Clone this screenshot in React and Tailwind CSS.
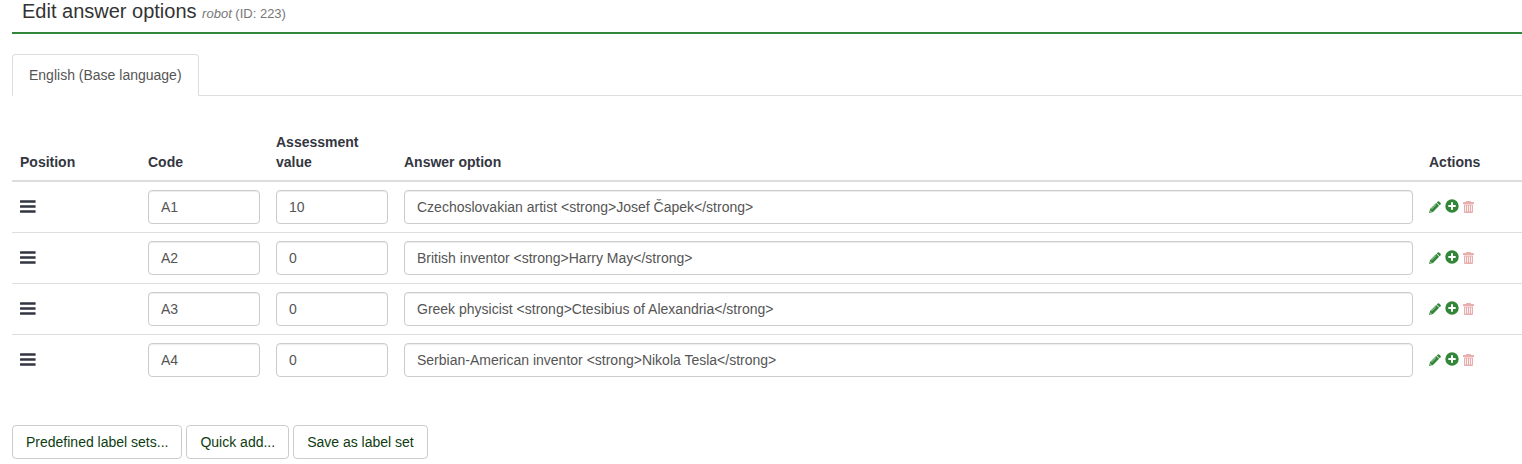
const answers = [
  { code: "A1", value: "10", text: "Czechoslovakian artist <strong>Josef Čapek</strong>" },
  { code: "A2", value: "0", text: "British inventor <strong>Harry May</strong>" },
  { code: "A3", value: "0", text: "Greek physicist <strong>Ctesibius of Alexandria</strong>" },
  { code: "A4", value: "0", text: "Serbian-American inventor <strong>Nikola Tesla</strong>" },
]

const BarsIcon = () => (
  <svg className="w-4 h-4" viewBox="0 0 16 16" fill="currentColor" aria-hidden="true">
    <rect x="0" y="1.2" width="15.6" height="2.6" rx="0.5" />
    <rect x="0" y="6.2" width="15.6" height="2.6" rx="0.5" />
    <rect x="0" y="11.2" width="15.6" height="2.6" rx="0.5" />
  </svg>
)

const PencilIcon = () => (
  <svg className="w-3 h-3" viewBox="0 0 12 12" fill="currentColor" aria-hidden="true">
    <path d="M8.8 0.5Q9.5 0 10.1 0.5L11.6 2Q12.1 2.6 11.6 3.2L10.6 4.3L7.7 1.4Z" />
    <path
      fillRule="evenodd"
      d="M7.2 1.9L10.1 4.8L4 10.9L0 12L1.1 8ZM6.7 3.4L2.2 7.9L2.6 8.3L7.1 3.8ZM1.6 9.4L1.2 10.8L2.6 10.4Z"
    />
  </svg>
)

const PlusCircleIcon = () => (
  <svg className="w-[14px] h-[14px]" viewBox="0 0 14 14" fill="currentColor" aria-hidden="true">
    <path
      fillRule="evenodd"
      d="M7 0.3A6.7 6.7 0 1 1 7 13.7A6.7 6.7 0 1 1 7 0.3ZM6 3.3V6H3.3V8H6V10.7H8V8H10.7V6H8V3.3Z"
    />
  </svg>
)

const TrashIcon = () => (
  <svg className="w-3 h-3" viewBox="0 0 12 12" fill="currentColor" aria-hidden="true">
    <path
      fillRule="evenodd"
      d="M3.8 0H7.2Q8 0 8 0.8V1H10.4Q11 1 11 1.6V3H0V1.6Q0 1 0.6 1H3V0.8Q3 0 3.8 0ZM4 0.9V1.1H7V0.9Z"
    />
    <path
      fillRule="evenodd"
      d="M1 3.6H10V11Q10 12 9 12H2Q1 12 1 11ZM2.1 4.4V10.6H2.9V4.4ZM4.1 4.4V10.6H4.9V4.4ZM6.1 4.4V10.6H6.9V4.4ZM8.1 4.4V10.6H8.9V4.4Z"
    />
  </svg>
)

const TextField = ({ label, value }) => (
  <input
    type="text"
    aria-label={label}
    defaultValue={value}
    className="block w-full h-[34px] px-3 rounded-[4px] border border-[#ccc] bg-white text-sm text-[#555] shadow-[inset_0_1px_1px_rgba(0,0,0,0.075)] focus:outline-none focus:border-[#328637]"
  />
)

const AnswerRow = ({ answer }) => (
  <tr className="border-t border-[#ddd] first:border-t-0">
    <td className="p-2">
      <button type="button" aria-label={`Move ${answer.code}`} className="block cursor-move">
        <BarsIcon />
      </button>
    </td>
    <td className="p-2">
      <TextField label={`Code ${answer.code}`} value={answer.code} />
    </td>
    <td className="p-2">
      <TextField label={`Assessment value ${answer.code}`} value={answer.value} />
    </td>
    <td className="p-2">
      <TextField label={`Answer option ${answer.code}`} value={answer.text} />
    </td>
    <td className="p-2">
      <div className="flex items-center gap-1 text-[#328637]">
        <button type="button" aria-label={`Edit ${answer.code}`}>
          <PencilIcon />
        </button>
        <button type="button" aria-label={`Add after ${answer.code}`} className="pb-[2px]">
          <PlusCircleIcon />
        </button>
        <button type="button" aria-label={`Delete ${answer.code}`} className="text-[#e8adad]">
          <TrashIcon />
        </button>
      </div>
    </td>
  </tr>
)

const ToolButton = ({ children }) => (
  <button
    type="button"
    className="h-[34px] px-[13px] rounded-[4px] border border-[#ccc] bg-white text-sm text-[#0d3c10] hover:bg-gray-100"
  >
    {children}
  </button>
)

const App = () => {
  return (
    <main className="pl-3 bg-white font-['Liberation_Sans',Arial,sans-serif] text-sm text-[#333641]">
      <h1 className="px-[10px] pb-[7px] border-b-2 border-[#328637] text-xl leading-[22px] text-[#333]">
        Edit answer options{" "}
        <small className="text-[13px] text-[#777]">
          <em>robot</em> (ID: 223)
        </small>
      </h1>

      <div role="tablist" className="flex mt-5 border-b border-[#ddd]">
        <button
          type="button"
          role="tab"
          aria-selected="true"
          className="-mb-px px-4 py-[10px] rounded-t-[4px] border border-[#ddd] border-b-white bg-white leading-5 text-[#555]"
        >
          English (Base language)
        </button>
      </div>

      <table className="w-full mt-7 table-fixed border-collapse">
        <thead>
          <tr className="border-b-2 border-[#ddd] text-left align-bottom leading-5">
            <th className="w-32 p-2">Position</th>
            <th className="w-32 p-2">Code</th>
            <th className="w-32 p-2">Assessment value</th>
            <th className="p-2">Answer option</th>
            <th className="w-[101px] p-2">Actions</th>
          </tr>
        </thead>
        <tbody>
          {answers.map((answer) => (
            <AnswerRow key={answer.code} answer={answer} />
          ))}
        </tbody>
      </table>

      <div className="flex gap-1 mt-10">
        <ToolButton>Predefined label sets...</ToolButton>
        <ToolButton>Quick add...</ToolButton>
        <ToolButton>Save as label set</ToolButton>
      </div>
    </main>
  )
}

export default App
